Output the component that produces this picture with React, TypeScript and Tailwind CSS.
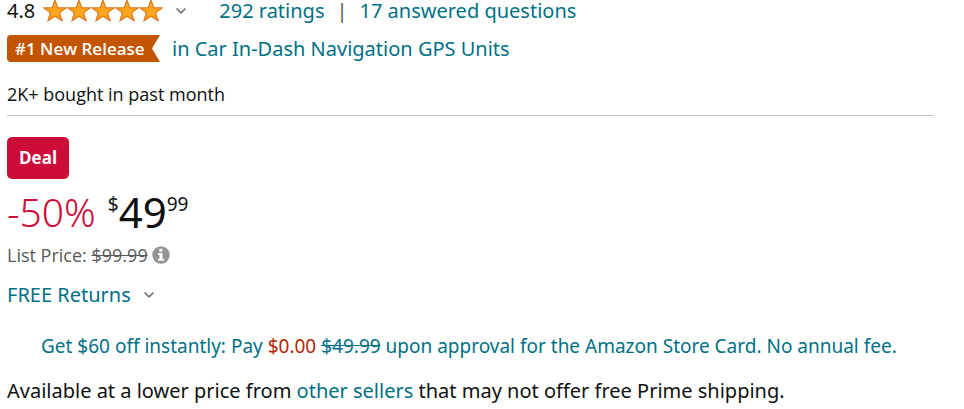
const STARS = [1, 2, 3, 4, 5];

function Star() {
  return (
    <svg viewBox="0 0 24 24" className="h-6 w-6 shrink-0" aria-hidden="true">
      <path
        d="M12 1.2l2.800 7.400 8.200.3-6.400 5 2.400 7.700-7-4.400-7 4.400 2.400-7.700-6.400-5 8.200-.3z"
        fill="#ffa41c"
        stroke="#de7921"
        strokeWidth="1.2"
      />
    </svg>
  );
}

function Chevron() {
  return (
    <svg viewBox="0 0 12 8" className="h-2 w-3" fill="none" aria-hidden="true">
      <path d="M1.500 1.500L6 5.800l4.500-4.300" stroke="#6f7373" strokeWidth="1.700" />
    </svg>
  );
}

function InfoIcon() {
  return (
    <svg viewBox="0 0 18 18" className="h-[18px] w-[18px]" aria-hidden="true">
      <circle cx="9" cy="9" r="8.700" fill="#949494" />
      <circle cx="8.800" cy="4.300" r="1.700" fill="#fff" />
      <path d="M6 7h4.500v5.800H12v1.900H6v-1.900h1.500V8.900H6z" fill="#fff" />
    </svg>
  );
}

export default function App() {
  return (
    <main className="bg-white pl-[7px] pr-[30px] font-['Noto_Sans',sans-serif] text-xl text-[#0f1111]">
      {/* Ratings */}
      <div className="flex h-[22px] items-center leading-[22px]">
        <span>4.8</span>
        <button type="button" className="ml-2 flex items-center" aria-label="4.8 out of 5 stars">
          {STARS.map((star) => (
            <Star key={star} />
          ))}
          <span className="ml-3">
            <Chevron />
          </span>
        </button>
        <a href="#ratings" className="ml-8 text-[#007185]">292 ratings</a>
        <span className="mx-3 text-[#565959]">|</span>
        <a href="#questions" className="text-[#007185]">17 answered questions</a>
      </div>

      {/* Release badge */}
      <div className="mt-[13px] flex items-center">
        <span className="flex h-[27px] w-[153px] items-center rounded-l bg-[#c45500] pl-2 font-['Open_Sans',sans-serif] text-[17px] leading-[25px] font-semibold text-white [clip-path:polygon(0_0,100%_0,145px_50%,100%_100%,0_100%)]">
          #1 New Release
        </span>
        <a href="#category" className="ml-3 leading-[27px] text-[#007185]">
          in Car In-Dash Navigation GPS Units
        </a>
      </div>

      <p className="mt-5 font-['Open_Sans',sans-serif] text-lg leading-6">2K+ bought in past month</p>
      <hr className="mt-[9px] border-t border-[#bbbfbf]" />

      {/* Price */}
      <div className="mt-[21px] flex">
        <span className="rounded-[5px] bg-[#cc0c39] px-3 font-['Open_Sans',sans-serif] text-[17px] font-bold leading-[42px] text-white">
          Deal
        </span>
      </div>
      <div className="mt-[9px] flex h-12 items-center">
        <span className="text-[39px] font-light leading-[48px] text-[#cc0c39]">-50%</span>
        <span className="ml-3 flex items-start">
          <span className="text-[19px] leading-8">$</span>
          <span className="text-[42px] leading-[48px]">49</span>
          <span className="text-[19px] leading-8">99</span>
        </span>
      </div>
      <div className="mt-[7px] flex items-center gap-1 font-['Open_Sans',sans-serif] text-lg leading-6 text-[#565959]">
        <p>
          List Price: <s>$99.99</s>
        </p>
        <button type="button" aria-label="List price details">
          <InfoIcon />
        </button>
      </div>
      <button type="button" className="mt-4 flex items-center gap-3 leading-6 text-[#007185]">
        FREE Returns
        <Chevron />
      </button>

      {/* Offers */}
      <p className="mt-[27px] pl-[34px] text-[19px] leading-6">
        <a href="#store-card" className="text-[#007185]">
          Get $60 off instantly: Pay <span className="text-[#b12704]">$0.00</span> <s>$49.99</s> upon approval for the
          Amazon Store Card. No annual fee.
        </a>
      </p>
      <p className="mt-[21px] leading-6">
        Available at a lower price from{' '}
        <a href="#sellers" className="text-[#007185]">other sellers</a> that may not offer free Prime shipping.
      </p>
    </main>
  );
}
